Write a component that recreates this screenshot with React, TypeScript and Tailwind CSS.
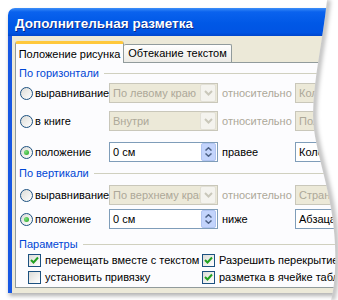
const ui = "font-['Liberation_Sans',sans-serif] text-[11px] leading-none";

function Chevron({ color }: { color: string }) {
  return (
    <svg width="9" height="6" viewBox="0 0 9 6">
      <path d="M1 1 L4.5 4.5 L8 1" fill="none" stroke={color} strokeWidth="2" />
    </svg>
  );
}

function Combo({ text, disabled, wide }: { text: string; disabled?: boolean; wide?: boolean }) {
  return (
    <div
      className={
        "h-[20px] flex items-center shrink-0 border " +
        (wide ? "w-[100px] " : "w-[109px] ") +
        (disabled ? "border-[#C9C7BA] bg-[#ECE9D8] text-[#ACA899]" : "border-[#7F9DB9] bg-white text-black")
      }
    >
      <span className="flex-1 pl-[3px] whitespace-nowrap overflow-hidden">{text}</span>
      {!wide && (
        <span className="mr-[1px] w-[16px] h-[18px] shrink-0 flex items-center justify-center rounded-[2px] border border-[#E2E0D6] bg-[#F4F3EE]">
          <Chevron color="#C9C7BA" />
        </span>
      )}
    </div>
  );
}

function Spin({ value }: { value: string }) {
  return (
    <div className="h-[20px] w-[109px] shrink-0 flex items-center border border-[#7F9DB9] bg-white text-black">
      <span className="flex-1 pl-[3px]">{value}</span>
      <span className="mr-[1px] w-[15px] h-[18px] flex flex-col items-center justify-center gap-[2px] rounded-[2px] border border-[#B1C4F0] bg-[#C3D4FC]">
        <svg width="7" height="4" viewBox="0 0 7 4">
          <path d="M0.5 3.5 L3.5 0.8 L6.5 3.5" fill="none" stroke="#4D6185" strokeWidth="1.5" />
        </svg>
        <svg width="7" height="4" viewBox="0 0 7 4">
          <path d="M0.5 0.5 L3.5 3.2 L6.5 0.5" fill="none" stroke="#4D6185" strokeWidth="1.5" />
        </svg>
      </span>
    </div>
  );
}

function Radio({ checked }: { checked?: boolean }) {
  return (
    <span className="w-[13px] h-[13px] shrink-0 rounded-full border border-[#1C5180] bg-[linear-gradient(135deg,#DCDCD7,#FFFFFF)] flex items-center justify-center">
      {checked && <span className="w-[5px] h-[5px] rounded-full bg-[radial-gradient(circle_at_35%_35%,#7BE07B,#21A121)]" />}
    </span>
  );
}

function Check({ checked }: { checked?: boolean }) {
  return (
    <span className="w-[13px] h-[13px] shrink-0 border border-[#1C5180] bg-[linear-gradient(135deg,#DCDCD7,#FFFFFF)] flex items-center justify-center">
      {checked && (
        <svg width="9" height="9" viewBox="0 0 9 9">
          <path d="M1 4 L3.5 6.5 L8 1.5" fill="none" stroke="#21A121" strokeWidth="2" />
        </svg>
      )}
    </span>
  );
}

function GroupLabel({ text, className }: { text: string; className: string }) {
  return (
    <div className={"h-[12px] flex items-center pl-[3px] " + className}>
      <span className="text-[#0046D5] whitespace-nowrap">{text}</span>
      <span className="flex-1 ml-[5px] h-px bg-[#D0D0BF]" />
    </div>
  );
}

function Row({
  label,
  checked,
  children,
  className,
}: {
  label: string;
  checked?: boolean;
  children: React.ReactNode;
  className: string;
}) {
  return (
    <div className={"h-[20px] flex items-center pl-[4px] " + className}>
      <div className="w-[89px] shrink-0 flex items-center gap-[2px]">
        <Radio checked={checked} />
        <span className="whitespace-nowrap">{label}</span>
      </div>
      {children}
    </div>
  );
}

function Side({ text, disabled }: { text: string; disabled?: boolean }) {
  return (
    <span className={"ml-[4px] w-[73px] shrink-0 whitespace-nowrap " + (disabled ? "text-[#ACA899]" : "")}>{text}</span>
  );
}

export default function App() {
  return (
    <div className={"relative w-[338px] h-[300px] overflow-hidden bg-white pt-[8px] pl-[8px] " + ui}>
      <div className="w-[345px] h-[285px] flex flex-col shadow-[1px_3px_4px_rgba(0,0,0,0.3)] rounded-tl-[7px]">
        {/* title bar */}
        <div className="h-[28px] shrink-0 rounded-tl-[7px] pl-[7px] pt-[3px] flex items-center bg-[linear-gradient(180deg,#3D8EF8_0%,#0A62EE_14%,#0058E6_55%,#0054E3_88%,#0046CC_100%)]">
          <span className="font-['Liberation_Sans',sans-serif] font-bold text-[13.5px] text-white [text-shadow:1px_1px_0_#0B2A8A]">
            Дополнительная разметка
          </span>
        </div>

        {/* body */}
        <div className="flex-1 flex flex-col border-l-[4px] border-[#1858E3] bg-[#ECE9D8] pt-[5px] pl-[3px] pb-[5px]">
          {/* tabs */}
          <div className="h-[21px] flex items-end">
            <div className="relative z-10 -mb-px h-[22px] w-[109px] shrink-0 flex items-center justify-center whitespace-nowrap rounded-t-[3px] border-x border-[#919B9C] border-t-[3px] border-t-[#FFC83C] bg-[#FCFCFE] pt-[1px]">
              Положение рисунка
            </div>
            <div className="h-[18px] w-[108px] shrink-0 flex items-center justify-center whitespace-nowrap rounded-t-[2px] border-r border-t border-[#919B9C] bg-[linear-gradient(180deg,#FFFFFF,#ECEBE6)]">
              Обтекание текстом
            </div>
          </div>

          {/* panel */}
          <div className="flex-1 border border-[#919B9C] bg-[#FCFCFE] flex flex-col text-black">
            <GroupLabel text="По горизонтали" className="mt-[4px]" />
            <Row label="выравнивание" className="mt-[4px]">
              <Combo text="По левому краю" disabled />
              <Side text="относительно" disabled />
              <Combo text="Колонки" disabled wide />
            </Row>
            <Row label="в книге" className="mt-[8px]">
              <Combo text="Внутри" disabled />
              <Side text="относительно" disabled />
              <Combo text="Поля" disabled wide />
            </Row>
            <Row label="положение" checked className="mt-[11px]">
              <Spin value="0 см" />
              <Side text="правее" />
              <Combo text="Колонки" wide />
            </Row>

            <GroupLabel text="По вертикали" className="mt-[5px]" />
            <Row label="выравнивание" className="mt-[6px]">
              <Combo text="По верхнему краю" disabled />
              <Side text="относительно" disabled />
              <Combo text="Страницы" disabled wide />
            </Row>
            <Row label="положение" checked className="mt-[4px]">
              <Spin value="0 см" />
              <Side text="ниже" />
              <Combo text="Абзаца" wide />
            </Row>

            <GroupLabel text="Параметры" className="mt-[9px]" />
            <div className="mt-[4px] h-[13px] flex items-center pl-[12px]">
              <div className="w-[174px] shrink-0 flex items-center gap-[4px]">
                <Check checked />
                <span className="whitespace-nowrap">перемещать вместе с текстом</span>
              </div>
              <div className="shrink-0 flex items-center gap-[4px]">
                <Check checked />
                <span className="whitespace-nowrap">Разрешить перекрытие</span>
              </div>
            </div>
            <div className="mt-[4px] h-[13px] flex items-center pl-[12px]">
              <div className="w-[174px] shrink-0 flex items-center gap-[4px]">
                <Check />
                <span className="whitespace-nowrap">установить привязку</span>
              </div>
              <div className="shrink-0 flex items-center gap-[4px]">
                <Check checked />
                <span className="whitespace-nowrap">разметка в ячейке таблицы</span>
              </div>
            </div>
          </div>
        </div>
      </div>

      {/* curved lens edge over the right side */}
      <svg className="absolute inset-0 pointer-events-none" width="338" height="300" viewBox="0 0 338 300">
        <defs>
          <clipPath id="outside">
            <path d="M338 0 L327 0 C323 40 313 80 313 115 C313 150 333 190 335 245 C336 270 334 290 331 300 L338 300 Z" />
          </clipPath>
          <filter id="blur" x="-20%" y="-20%" width="140%" height="140%">
            <feGaussianBlur stdDeviation="2.2" />
          </filter>
        </defs>
        <path d="M338 0 L327 0 C323 40 313 80 313 115 C313 150 333 190 335 245 C336 270 334 290 331 300 L338 300 Z" fill="#FFFFFF" />
        <g clipPath="url(#outside)">
          <path
            d="M327 0 C323 40 313 80 313 115 C313 150 333 190 335 245 C336 270 334 290 331 300"
            fill="none"
            stroke="#000000"
            strokeOpacity="0.28"
            strokeWidth="5"
            filter="url(#blur)"
            transform="translate(1 0)"
          />
        </g>
      </svg>
    </div>
  );
}
